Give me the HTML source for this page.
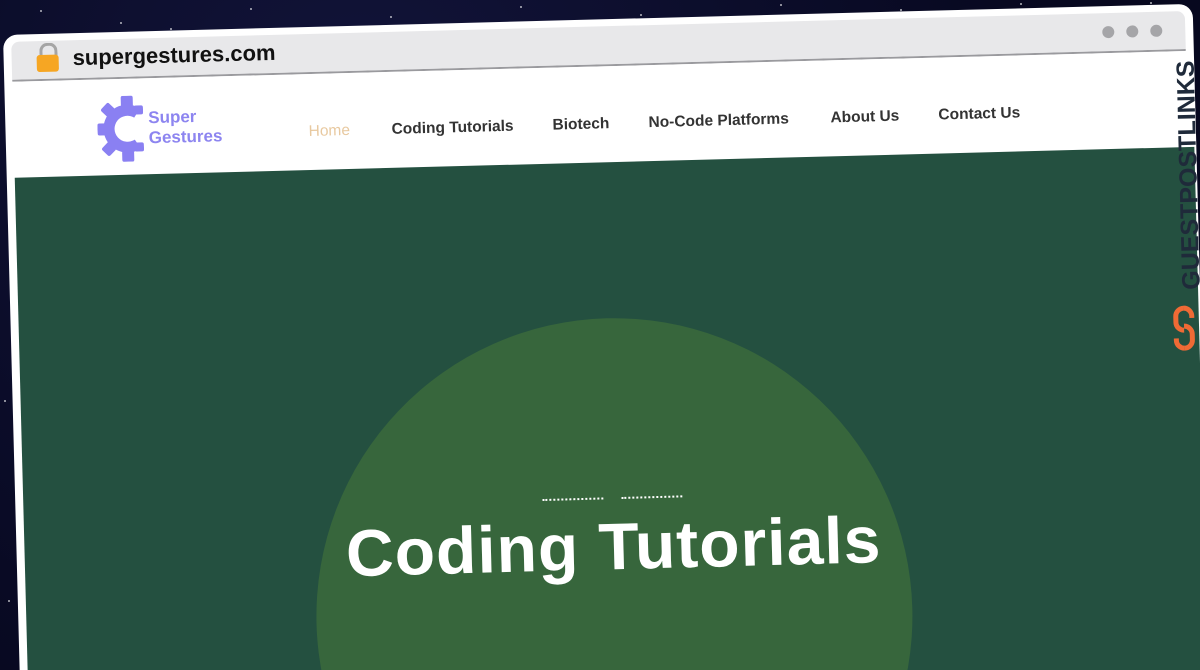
<!DOCTYPE html>
<html><head><meta charset="utf-8"><style>
html,body{margin:0;padding:0;width:1200px;height:670px;overflow:hidden;background:#0b0c2a;font-family:"Liberation Sans",sans-serif;position:relative}
.bg{position:absolute;inset:0;background:radial-gradient(circle at 30% 20%,#12143a,#07081f 70%)}
.star{position:absolute;width:2px;height:2px;background:#fff;border-radius:50%;opacity:.7}
.win{position:absolute;left:3px;top:35px;width:1190px;height:720px;background:#fff;border-radius:14px;transform-origin:0 0;transform:rotate(-1.5deg);overflow:hidden}
.bar{position:absolute;left:8px;top:7px;width:1174px;height:38px;background:#e8e8ea;border-bottom:2px solid #9a9a9e;border-radius:8px 8px 0 0}
.lock{position:absolute;left:33px;top:21px;width:22px;height:17px;background:#f6a623;border-radius:3px}
.shackle{position:absolute;left:36px;top:9px;width:12px;height:14px;border:3px solid #a5a5a5;border-bottom:none;border-radius:8px 8px 0 0}
.url{position:absolute;left:69px;top:12px;font-size:22px;font-weight:bold;color:#111}
.dot{position:absolute;top:20px;width:12px;height:12px;border-radius:50%;background:#a5a5a8}
.nav{position:absolute;top:96px;font-size:15.5px;color:#333;font-weight:bold}
.logo{position:absolute;left:143px;top:77px;font-size:17px;font-weight:bold;color:#8d85f0;line-height:20px}
.green{position:absolute;left:8px;top:143px;width:1180px;height:640px;background:#245040}
.circle{position:absolute;left:298px;top:299px;width:596px;height:596px;border-radius:50%;background:#37663c}
.title{position:absolute;left:197px;top:489px;width:800px;text-align:center;font-size:66px;font-weight:bold;color:#fff;letter-spacing:1px}
.dots{position:absolute;top:478px;width:61px;border-top:2px dotted #fff}
.gpl{position:absolute;left:1062px;top:162px;width:240px;transform:rotate(-90deg);font-size:25px;font-weight:bold;color:#1f2a3a;text-align:right;transform-origin:center}
</style></head><body>
<div class="bg"></div>
<div class="star" style="left:40px;top:10px"></div><div class="star" style="left:120px;top:22px"></div><div class="star" style="left:250px;top:8px"></div><div class="star" style="left:390px;top:16px"></div><div class="star" style="left:520px;top:6px"></div><div class="star" style="left:640px;top:14px"></div><div class="star" style="left:780px;top:4px"></div><div class="star" style="left:900px;top:9px"></div><div class="star" style="left:1020px;top:3px"></div><div class="star" style="left:1150px;top:2px"></div><div class="star" style="left:8px;top:600px"></div><div class="star" style="left:4px;top:400px"></div><div class="star" style="left:170px;top:28px"></div>
<div class="win">
 <div class="bar"></div>
 <div class="shackle"></div><div class="lock"></div>
 <div class="url">supergestures.com</div>
 <div class="dot" style="left:1099px"></div><div class="dot" style="left:1123px"></div><div class="dot" style="left:1147px"></div>
 <svg style="position:absolute;left:92px;top:64px" width="46" height="66" viewBox="0 0 46 66">
  <g fill="#8a80f2">
   <path d="M33 9a24 24 0 1 0 10 44l-6-9a13 13 0 1 1 0-22l6-9A24 24 0 0 0 33 9z"/>
   <rect x="24" y="0" width="12" height="11" rx="2"/>
   <rect x="24" y="55" width="12" height="11" rx="2"/>
   <rect x="0" y="27" width="11" height="12" rx="2"/>
   <rect x="6" y="8" width="11" height="11" rx="2" transform="rotate(45 11 13)"/>
   <rect x="6" y="47" width="11" height="11" rx="2" transform="rotate(45 11 52)"/>
   <rect x="37" y="10" width="9" height="9" rx="2"/>
   <rect x="37" y="47" width="9" height="9" rx="2"/>
  </g>
 </svg>
 <div class="logo">Super<br>Gestures</div>
 <div class="nav" style="left:303px;color:#e8c9a0;font-weight:normal">Home</div>
 <div class="nav" style="left:386px">Coding Tutorials</div>
 <div class="nav" style="left:547px">Biotech</div>
 <div class="nav" style="left:643px">No-Code Platforms</div>
 <div class="nav" style="left:825px">About Us</div>
 <div class="nav" style="left:933px">Contact Us</div>
 <div class="green"></div>
 <div class="circle"></div>
 <div class="dots" style="left:527px"></div><div class="dots" style="left:606px"></div>
 <div class="title">Coding Tutorials</div>
 <div class="gpl">GUESTPOSTLINKS</div>
 <svg style="position:absolute;left:1160px;top:300px" width="26" height="48" viewBox="0 0 26 48">
  <g fill="none" stroke="#f06a35" stroke-width="5">
   <path d="M13 4a8 8 0 0 0-8 8v6a8 8 0 0 0 8 8"/>
   <path d="M13 4a8 8 0 0 1 8 8v2"/>
   <path d="M13 44a8 8 0 0 0 8-8v-6a8 8 0 0 0-8-8"/>
   <path d="M13 44a8 8 0 0 1-8-8v-2"/>
  </g>
 </svg>
</div>
</body></html>
